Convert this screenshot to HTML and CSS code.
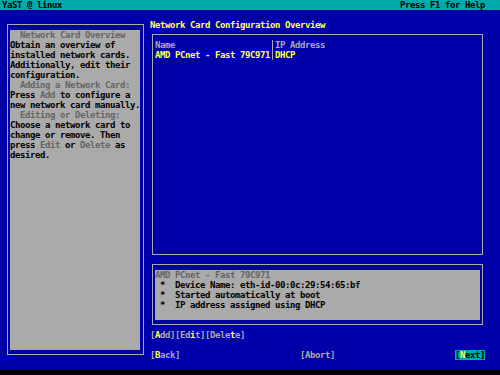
FILE: index.html
```html
<!DOCTYPE html>
<html lang="en">
<head>
    <meta charset="UTF-8">
    <title>YaST - Network Card Configuration Overview</title>
    <link rel="stylesheet" href="styles.css">
</head>
<body>
    <div class="screen">
        <div class="titlebar">
            <span>YaST @ linux</span>
            <span>Press F1 for Help</span>
        </div>

        <div class="main">
            <!-- Help pane -->
            <div class="help-frame">
                <div class="help-text">
                    <p class="help-title">Network Card Overview</p>
                    <p>Obtain an overview of<br>installed network cards.<br>Additionally, edit their<br>configuration.</p>
                    <p class="help-title">Adding a Network Card:</p>
                    <p>Press <span class="dim">Add</span> to configure a<br>new network card manually.</p>
                    <p class="help-title">Editing or Deleting:</p>
                    <p>Choose a network card to<br>change or remove. Then<br>press <span class="dim">Edit</span> or <span class="dim">Delete</span> as<br>desired.</p>
                </div>
            </div>

            <!-- Dialog -->
            <div class="content">
                <h1 class="dialog-title">Network Card Configuration Overview</h1>

                <div class="list-frame">
                    <div class="card-table">
                        <span class="col-head">Name</span>
                        <span class="col-sep"></span>
                        <span class="col-head">IP Address</span>
                        <span class="cell">AMD PCnet - Fast 79C971</span>
                        <span class="cell">DHCP</span>
                    </div>
                </div>

                <div class="detail-frame">
                    <div class="detail">
                        <p class="detail-title">AMD PCnet - Fast 79C971</p>
                        <p class="detail-line"> *  Device Name: eth-id-00:0c:29:54:65:bf</p>
                        <p class="detail-line"> *  Started automatically at boot</p>
                        <p class="detail-line"> *  IP address assigned using DHCP</p>
                    </div>
                </div>

                <div class="actions">[<span class="hot">A</span>dd][Ed<span class="hot">i</span>t][Dele<span class="hot">t</span>e]</div>

                <div class="nav">
                    <span>[<span class="hot">B</span>ack]</span>
                    <span>[Abort]</span>
                    <span class="btn-focus">[<span class="hot">N</span>ext]</span>
                </div>
            </div>
        </div>
    </div>
</body>
</html>
```

FILE: styles.css
```css
/* text mode screen: 100 cols x 37 rows, one cell = 5px x 10px */
body {
    margin: 0;
    background: #000;
    font-family: "DejaVu Sans Mono", "Liberation Mono", monospace;
    font-size: 9px;
    font-weight: bold;
    letter-spacing: -0.418px;
    line-height: 10px;
}
p, h1 {
    margin: 0;
}
.screen {
    width: 500px;
    height: 370px;
    background: #0000aa;
    color: #aaaaaa;
}
.titlebar {
    display: flex;
    justify-content: space-between;
    height: 10px;
    padding: 0 15px 0 2px;
    background: #00aaaa;
    color: #000;
}
.main {
    display: flex;
}

/* help pane on the left */
.help-frame {
    box-sizing: border-box;
    width: 137px;
    height: 331px;
    margin: 14px 0 0 7px;
    padding: 5px 3px 4px 2px;
    border: 1px solid #aaaaaa;
}
.help-text {
    height: 100%;
    background: #aaaaaa;
    color: #000;
    white-space: nowrap;
}
.help-title {
    padding-left: 10px;
    color: #666666;
}
.dim {
    color: #666666;
}

/* dialog on the right */
.content {
    width: 335px;
    margin-left: 6px;
}
.dialog-title {
    margin-top: 10px;
    font-size: inherit;
    color: #ffff55;
}
.list-frame {
    box-sizing: border-box;
    width: 331px;
    height: 221px;
    margin: 4px 0 0 2px;
    padding: 5px 2px;
    border: 1px solid #aaaaaa;
}
.card-table {
    display: grid;
    grid-template-columns: 115px 5px auto;
    grid-auto-rows: 10px;
}
.col-head {
    color: #aaaaaa;
}
.col-sep {
    grid-row: 1 / 3;
    grid-column: 2;
    width: 1px;
    margin-left: 2px;
    background: #aaaaaa;
}
.cell {
    color: #ffff55;
}
.card-table .cell:first-of-type {
    grid-column: 1;
}
.card-table .cell:last-of-type {
    grid-column: 3;
}
.detail-frame {
    box-sizing: border-box;
    width: 331px;
    height: 61px;
    margin: 9px 0 0 2px;
    padding: 5px 2px 4px;
    border: 1px solid #aaaaaa;
}
.detail {
    height: 100%;
    background: #aaaaaa;
    color: #000;
}
.detail-title {
    color: #666666;
}
.detail-line {
    white-space: pre;
}

/* buttons */
.actions {
    height: 10px;
    margin-top: 5px;
}
.nav {
    display: flex;
    justify-content: space-between;
    margin-top: 10px;
}
.hot {
    color: #ffff55;
}
.btn-focus {
    background: #00aaaa;
    color: #000;
}
```
